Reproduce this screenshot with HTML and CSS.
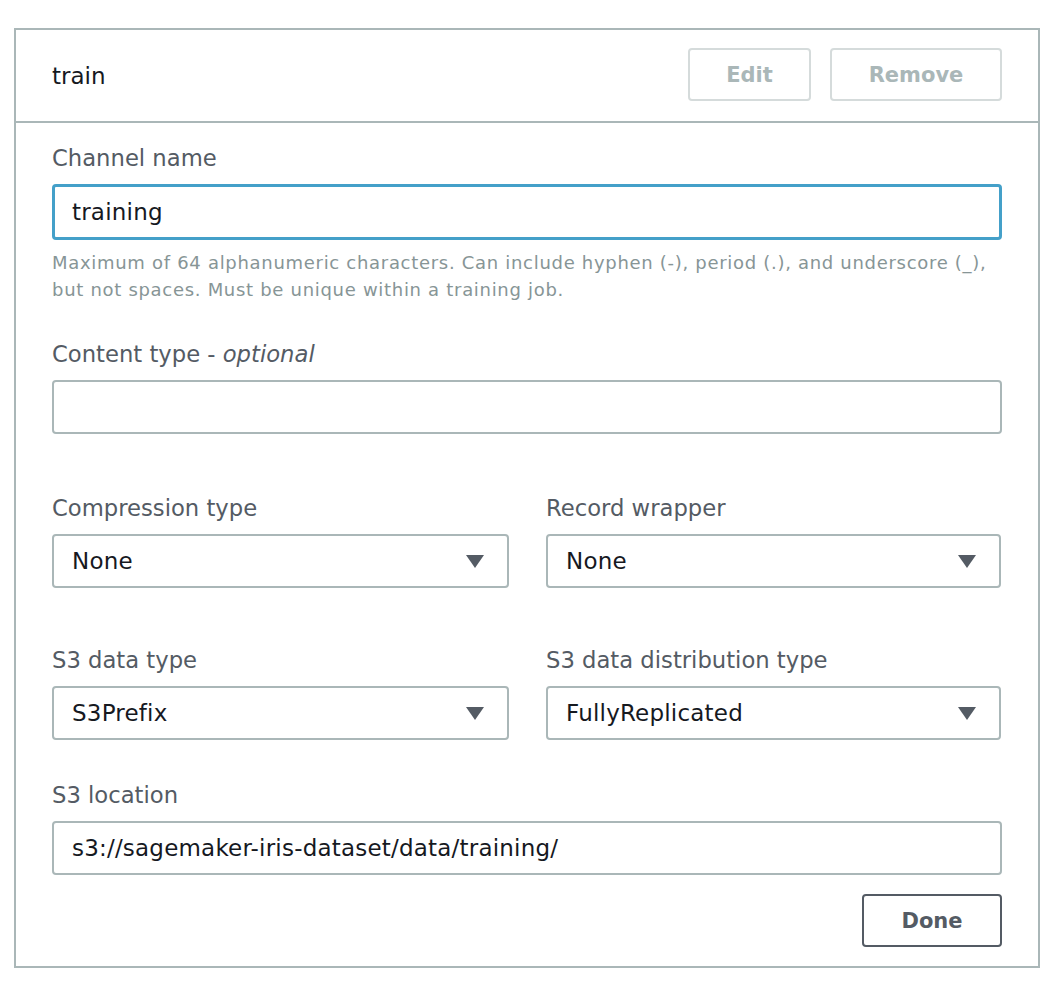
FILE: index.html
```html
<!DOCTYPE html>
<html>
<head>
<meta charset="utf-8">
<link rel="stylesheet" href="styles.css">
</head>
<body>
<div class="panel">
  <div class="panel-header">
    <div class="panel-title">train</div>
    <div class="header-actions">
      <button class="btn btn-disabled btn-edit">Edit</button>
      <button class="btn btn-disabled btn-remove">Remove</button>
    </div>
  </div>
  <div class="panel-body">
    <div class="field field-channel">
      <div class="label">Channel name</div>
      <div class="input input-focused">training</div>
      <div class="hint">Maximum of 64 alphanumeric characters. Can include hyphen (-), period (.), and underscore (_), but not spaces. Must be unique within a training job.</div>
    </div>
    <div class="field field-content">
      <div class="label">Content type - <em>optional</em></div>
      <div class="input"></div>
    </div>
    <div class="row row-compression">
      <div class="field">
        <div class="label">Compression type</div>
        <div class="input select"><span>None</span><span class="caret"></span></div>
      </div>
      <div class="field">
        <div class="label">Record wrapper</div>
        <div class="input select"><span>None</span><span class="caret"></span></div>
      </div>
    </div>
    <div class="row row-s3">
      <div class="field">
        <div class="label">S3 data type</div>
        <div class="input select"><span>S3Prefix</span><span class="caret"></span></div>
      </div>
      <div class="field">
        <div class="label">S3 data distribution type</div>
        <div class="input select"><span>FullyReplicated</span><span class="caret"></span></div>
      </div>
    </div>
    <div class="field field-location">
      <div class="label">S3 location</div>
      <div class="input">s3://sagemaker-iris-dataset/data/training/</div>
    </div>
    <div class="footer">
      <button class="btn btn-done">Done</button>
    </div>
  </div>
</div>
</body>
</html>
```
FILE: styles.css
```css
* { box-sizing: border-box; }
body {
  margin: 0;
  background: #ffffff;
  font-family: "DejaVu Sans", "Open Sans", "Liberation Sans", sans-serif;
  color: #16191f;
}
.panel {
  margin: 28px 0 0 14px;
  width: 1026px;
  height: 940px;
  border: 2px solid #aab7b8;
  display: flex;
  flex-direction: column;
}
.panel-header {
  height: 93px;
  border-bottom: 2px solid #aab7b8;
  display: flex;
  align-items: center;
  justify-content: space-between;
  padding: 0 36px 0 36px;
}
.panel-title {
  font-size: 23px;
  color: #16191f;
  margin-top: 0;
}
.header-actions {
  display: flex;
  gap: 19px;
  margin-top: -2px;
}
.btn {
  font-family: inherit;
  font-size: 21px;
  font-weight: 700;
  background: #ffffff;
  border-radius: 4px;
  height: 53px;
  padding: 0;
}
.btn-disabled {
  color: #aab7b8;
  border: 2px solid #d5dbdb;
}
.btn-edit { width: 123px; }
.btn-remove { width: 172px; }
.panel-body {
  padding: 20px 36px 0 36px;
  display: flex;
  flex-direction: column;
}
.label {
  font-size: 22.7px;
  line-height: 30px;
  color: #545b64;
  margin-bottom: 11px;
}
.label em { font-style: italic; }
.input {
  height: 54px;
  border: 2px solid #aab7b8;
  border-radius: 4px;
  font-size: 23px;
  letter-spacing: 0.2px;
  color: #16191f;
  padding: 0 18px;
  display: flex;
  align-items: center;
}
.input-focused {
  height: 56px;
  border: 3px solid #44a0c9;
  padding: 0 17px;
}
.hint {
  margin-top: 9px;
  font-size: 18px;
  letter-spacing: 0.7px;
  line-height: 27px;
  color: #879596;
}
.field-content { margin-top: 36px; }
.row {
  display: grid;
  grid-template-columns: 457px 455px;
  column-gap: 37px;
}
.row-compression { margin-top: 59px; }
.row-s3 { margin-top: 57px; }
.field-location { margin-top: 40px; }
.select { justify-content: space-between; }
.caret {
  width: 0;
  height: 0;
  border-left: 9px solid transparent;
  border-right: 9px solid transparent;
  border-top: 13px solid #545b64;
  margin-right: 5px;
}
.footer {
  display: flex;
  justify-content: flex-end;
  margin-top: 19px;
}
.btn-done {
  width: 140px;
  height: 53px;
  border: 2px solid #545b64;
  color: #545b64;
}
```
